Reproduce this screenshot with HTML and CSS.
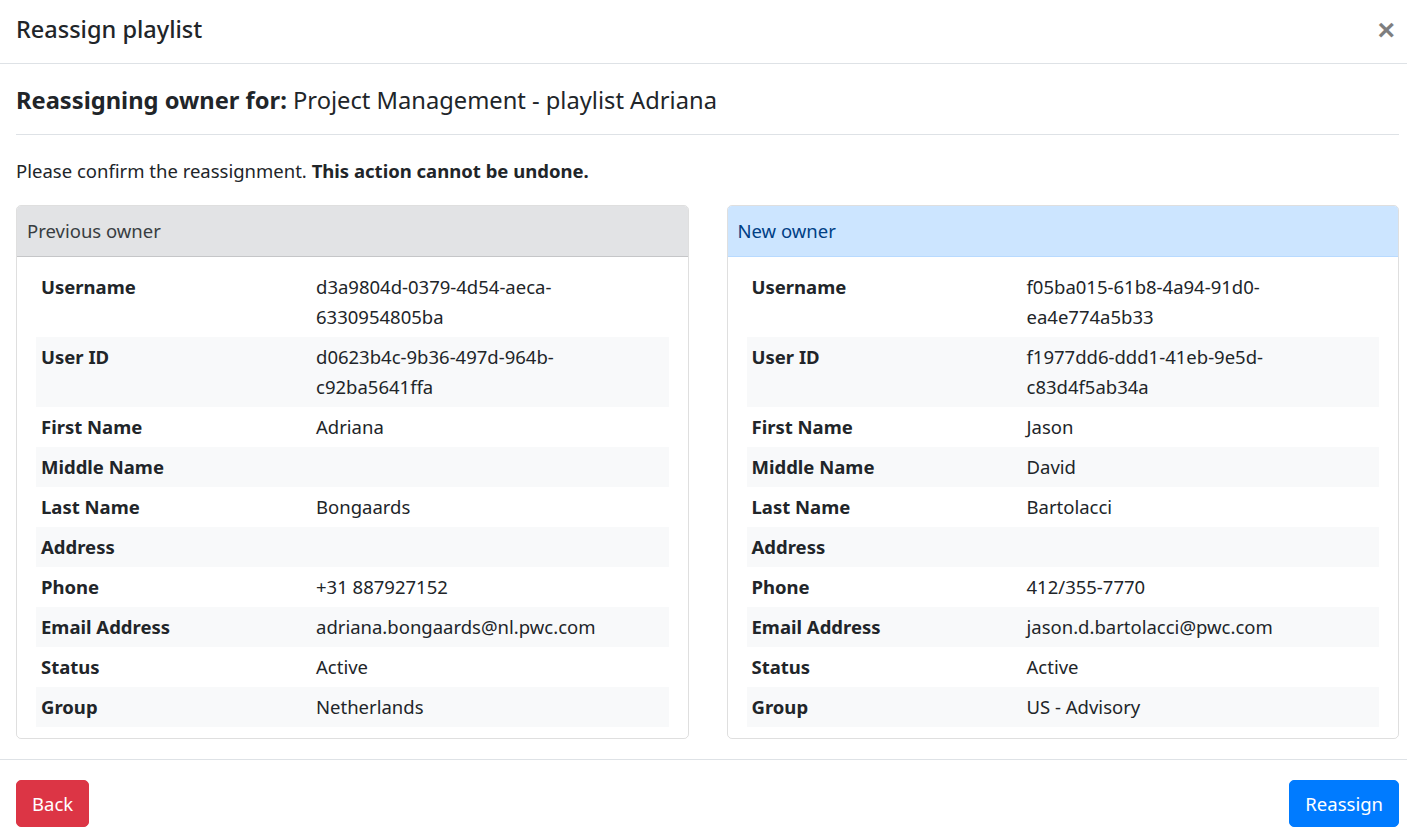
FILE: index.html
```html
<!DOCTYPE html>
<html lang="en">
<head>
<meta charset="utf-8">
<title>Reassign playlist</title>
<link rel="stylesheet" href="styles.css">
</head>
<body>
<div class="modal">
  <header class="modal-header">
    <h5 class="modal-title">Reassign playlist</h5>
    <button class="close" type="button" aria-label="Close">&times;</button>
  </header>
  <main class="modal-body">
    <h4 class="subject"><strong>Reassigning owner for:</strong> Project Management - playlist Adriana</h4>
    <p class="confirm">Please confirm the reassignment. <strong>This action cannot be undone.</strong></p>
    <div class="cards">
      <section class="card card-prev">
        <div class="card-header">Previous owner</div>
        <div class="card-body">
          <table class="info">
            <tr><th>Username</th><td>d3a9804d-0379-4d54-aeca-6330954805ba</td></tr>
            <tr><th>User ID</th><td>d0623b4c-9b36-497d-964b-c92ba5641ffa</td></tr>
            <tr><th>First Name</th><td>Adriana</td></tr>
            <tr><th>Middle Name</th><td></td></tr>
            <tr><th>Last Name</th><td>Bongaards</td></tr>
            <tr><th>Address</th><td></td></tr>
            <tr><th>Phone</th><td>+31 887927152</td></tr>
            <tr><th>Email Address</th><td>adriana.bongaards@nl.pwc.com</td></tr>
            <tr><th>Status</th><td>Active</td></tr>
            <tr><th>Group</th><td>Netherlands</td></tr>
          </table>
        </div>
      </section>
      <section class="card card-new">
        <div class="card-header">New owner</div>
        <div class="card-body">
          <table class="info">
            <tr><th>Username</th><td>f05ba015-61b8-4a94-91d0-ea4e774a5b33</td></tr>
            <tr><th>User ID</th><td>f1977dd6-ddd1-41eb-9e5d-c83d4f5ab34a</td></tr>
            <tr><th>First Name</th><td>Jason</td></tr>
            <tr><th>Middle Name</th><td>David</td></tr>
            <tr><th>Last Name</th><td>Bartolacci</td></tr>
            <tr><th>Address</th><td></td></tr>
            <tr><th>Phone</th><td>412/355-7770</td></tr>
            <tr><th>Email Address</th><td>jason.d.bartolacci@pwc.com</td></tr>
            <tr><th>Status</th><td>Active</td></tr>
            <tr><th>Group</th><td>US - Advisory</td></tr>
          </table>
        </div>
      </section>
    </div>
  </main>
  <footer class="modal-footer">
    <button class="btn btn-danger" type="button">Back</button>
    <button class="btn btn-primary" type="button">Reassign</button>
  </footer>
</div>
</body>
</html>
```
FILE: styles.css
```css
* { box-sizing: border-box; }
html, body { margin: 0; padding: 0; background: #fff; }
body {
  font-family: "Noto Sans", "Open Sans", sans-serif;
  font-size: 18.5px;
  line-height: 30px;
  color: #212529;
}
.modal { width: 1407px; }
.modal-header {
  display: flex;
  align-items: center;
  justify-content: space-between;
  height: 64px;
  padding: 0 8px 0 16px;
  border-bottom: 1px solid #dee2e6;
}
.modal-title {
  margin: 0;
  font-size: 23.5px;
  font-weight: 500;
  line-height: 30px;
  padding-bottom: 6px;
}
.close {
  border: 0;
  background: transparent;
  padding: 0 4px 4px 12px;
  font-family: "Liberation Sans", sans-serif;
  font-size: 30px;
  font-weight: 700;
  line-height: 1;
  color: #000;
  opacity: .5;
  cursor: pointer;
}
.modal-body { padding: 0 8px 20px 16px; }
.subject {
  margin: 0;
  padding: 19px 0 17px;
  font-size: 23.7px;
  font-weight: 400;
  line-height: 34px;
  border-bottom: 1px solid #dee2e6;
}
.subject strong { font-weight: 700; }
.confirm { margin: 0; padding: 21px 0 19px; }
.confirm strong { font-weight: 700; }
.cards {
  display: grid;
  grid-template-columns: 1fr 1fr;
  column-gap: 38px;
}
.card {
  border: 1px solid rgba(0,0,0,.125);
  border-radius: 5px;
  overflow: hidden;
}
.card-header {
  padding: 10px 10px;
  border-bottom: 1px solid rgba(0,0,0,.125);
  line-height: 30px;
}
.card-prev .card-header { background: #e2e3e5; color: #383d41; }
.card-new .card-header { background: #cce5ff; color: #004085; border-bottom-color: #b8daff; }
.card-body { padding: 10px 19px 11px; }
.info { width: 100%; border-collapse: collapse; }
.info th, .info td {
  padding: 5px;
  vertical-align: top;
  text-align: left;
}
.info th { width: 275px; font-weight: 700; }
.info tr:nth-child(even) { background: #f8f9fa; }
.modal-footer {
  display: flex;
  justify-content: space-between;
  padding: 20px 8px 9px 16px;
  border-top: 1px solid #dee2e6;
}
.btn {
  font-family: inherit;
  font-size: 18.5px;
  line-height: 30px;
  padding: 7.5px 15px;
  border: 1px solid transparent;
  border-radius: 5px;
  color: #fff;
  cursor: pointer;
}
.btn-danger { background: #dc3545; border-color: #dc3545; }
.btn-primary { background: #007bff; border-color: #007bff; }
```
